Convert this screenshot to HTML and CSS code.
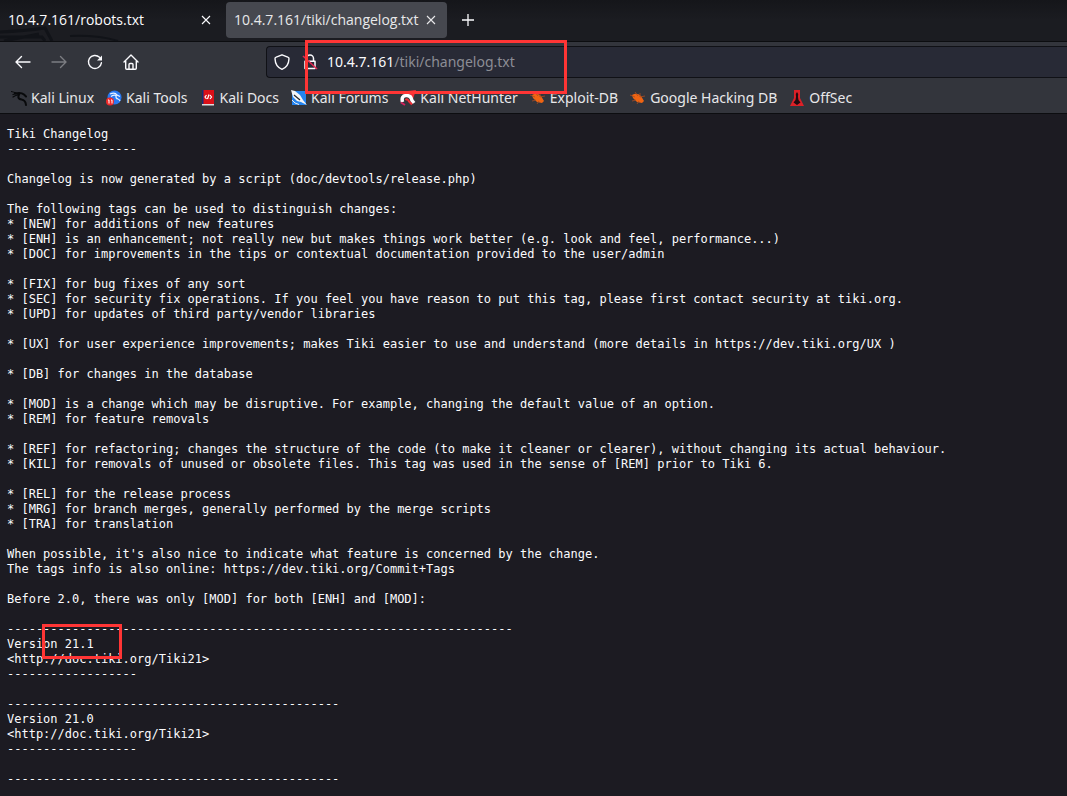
FILE: index.html
```
<!DOCTYPE html>
<html lang="en">
<head>
<meta charset="utf-8">
<title>10.4.7.161/tiki/changelog.txt</title>
<link rel="stylesheet" href="styles.css">
</head>
<body>
<header class="browser">
  <div class="tabs">
    <svg class="tabs-art" width="130" height="41" viewBox="0 0 130 41" fill="none"><path d="M0 32Q24 31 45 28L52 41M0 37L42 37L45 41M4 41L39 34" stroke="#111318" stroke-width="3"/><path d="M70 36Q98 35 118 41" stroke="#111318" stroke-width="2"/></svg>
    <div class="tab">
      <a class="tab-title" href="#">10.4.7.161/robots.txt</a>
      <button class="close" aria-label="Close tab"><svg width="10" height="10" viewBox="0 0 10 10"><path d="M1 1l8 8M9 1l-8 8" stroke="currentColor" stroke-width="1.1"/></svg></button>
    </div>
    <div class="tab active">
      <a class="tab-title" href="#">10.4.7.161/tiki/changelog.txt</a>
      <button class="close" aria-label="Close tab"><svg width="10" height="10" viewBox="0 0 10 10"><path d="M1 1l8 8M9 1l-8 8" stroke="currentColor" stroke-width="1.1"/></svg></button>
    </div>
    <button class="new-tab" aria-label="New tab"><svg width="14" height="14" viewBox="0 0 14 14"><path d="M7 1v12M1 7h12" stroke="currentColor" stroke-width="1.3"/></svg></button>
  </div>
  <div class="nav">
    <div class="nav-buttons">
      <button class="nav-btn" aria-label="Back"><svg width="16" height="16" viewBox="0 0 16 16" fill="none" stroke="currentColor" stroke-width="1.4" stroke-linecap="round" stroke-linejoin="round"><path d="M15 8H1.5M6.500 2.500L1 8l5.500 5.500"/></svg></button>
      <button class="nav-btn off" aria-label="Forward"><svg width="16" height="16" viewBox="0 0 16 16" fill="none" stroke="currentColor" stroke-width="1.4" stroke-linecap="round" stroke-linejoin="round"><path d="M1 8h13.500M9.500 2.500L15 8l-5.500 5.500"/></svg></button>
      <button class="nav-btn" aria-label="Reload"><svg width="16" height="16" viewBox="0 0 16 16" fill="none" stroke="currentColor" stroke-width="1.4" stroke-linecap="round"><path d="M12.500 3.300A6.500 6.500 0 1 0 14.400 8.800"/><path d="M15 1.500V6.500H10z" fill="currentColor" stroke="none"/></svg></button>
      <button class="nav-btn" aria-label="Home"><svg width="16" height="16" viewBox="0 0 16 16" fill="none" stroke="currentColor" stroke-width="1.4" stroke-linecap="round" stroke-linejoin="round"><path d="M1 8L8 1l7 7M2.700 7v7.200q0 1 1 1h8.600q1 0 1-1V7M6 15V10.500q0-1 1-1h2q1 0 1 1V15"/></svg></button>
    </div>
    <div class="url-bar">
      <svg width="16" height="16" viewBox="0 0 16 16" fill="none" stroke="currentColor" stroke-width="1.4" stroke-linejoin="round"><path d="M8 .8l5.800 2.300q1.200.4 1.200 1.600C14.800 9.200 12.600 13.500 8 15.300 3.400 13.500 1.200 9.200 1 4.700q0-1.200 1.200-1.600z"/></svg>
      <svg class="lock" width="16" height="16" viewBox="0 0 16 16" fill="none"><path d="M4.500 7V4.500a3.500 3.500 0 0 1 7 0V7M3 7.200h10v7.300H3z" stroke="currentColor" stroke-width="1.500" stroke-linejoin="round"/><path d="M1 2l14 13" stroke="#e22850" stroke-width="1.600"/></svg>
      <a class="url" href="#"><b>10.4.7.161</b>/tiki/changelog.txt</a>
      <span class="mark mark-url"></span>
    </div>
  </div>
  <nav class="bookmarks">
    <a class="bookmark" href="#"><svg width="16" height="16" viewBox="0 0 16 16" fill="none" stroke="#08090b" stroke-linecap="round"><path d="M0 1.500q3 .5 5 1.500M2 4.500q3-1.500 6 0M2 7q3-2 5-2" stroke-width="1.200"/><path d="M4 3.500q6-1.500 9 1l2 2M8 4.500q-2 4.500 2.500 5 4 .5 4.500 5.500" stroke-width="2"/></svg>Kali Linux</a>
    <a class="bookmark" href="#"><svg width="16" height="16" viewBox="0 0 16 16" fill="none"><circle cx="8.500" cy="7.500" r="7" fill="#2878f0"/><path d="M4 4q5-2 7 1l3 1.500M5 6.500q3-2 5-1-.5 3 2 3.500 1.500.5 2 2" stroke="#e9f3ff" stroke-width="1.200"/><circle cx="4" cy="11.500" r="4" fill="#ef2929"/><path d="M2 10h1v3.500M5 10h1v3.500" stroke="#fff"/></svg>Kali Tools</a>
    <a class="bookmark" href="#"><svg width="16" height="16" viewBox="0 0 16 16" fill="none"><path d="M2 0h12v14H2z" fill="#db1018"/><path d="M2 0h1.500v14H2z" fill="#182c76"/><path d="M2 14h12v1.500H2z" fill="#ddd"/><path d="M6.500 5L5 7l1.500 2M10 5l1.500 2L10 9M9 4.500L7.500 9" stroke="#fff" stroke-width="1.200"/></svg>Kali Docs</a>
    <a class="bookmark" href="#"><svg width="16" height="16" viewBox="0 0 16 16"><path d="M1 1h14v14H1z" fill="#2484ef"/><path d="M0 0l4 1 5 4 3 5 4 5-6-3-4-1-4-4z" fill="#f4f5f6"/><path d="M3 5l6 5" stroke="#20252c" stroke-width="1.200"/><path d="M1 10l3 3 4 1.500" stroke="#eee" fill="none"/></svg>Kali Forums</a>
    <a class="bookmark" href="#"><svg width="16" height="16" viewBox="0 0 16 16" fill="none"><path d="M8 1l8-1-3 9z" fill="#f32c35"/><path d="M2.500 12Q1 6 6 5.500q5-.5 6 5l2 2.500" stroke="#fff" stroke-width="3.500"/><path d="M5.500 10q2-2 3.500 1.500l3 3" stroke="#f32c35" stroke-width="2"/><path d="M1 12.500l4 2.500" stroke="#d3225d" stroke-width="2"/></svg>Kali NetHunter</a>
    <a class="bookmark" href="#"><svg width="16" height="16" viewBox="0 0 16 16"><path d="M2 5q5-3 9 1l3 5-2 2-5-1-4-4z" fill="#ef6412"/><path d="M0 5l5 2M5 2l3 4M10 3v4l5-1M2 11l4-1M7 14l2-3" stroke="#a94d22" stroke-width=".8" fill="none"/></svg>Exploit-DB</a>
    <a class="bookmark" href="#"><svg width="16" height="16" viewBox="0 0 16 16"><path d="M2 5q5-3 9 1l3 5-2 2-5-1-4-4z" fill="#ef6412"/><path d="M0 5l5 2M5 2l3 4M10 3v4l5-1M2 11l4-1M7 14l2-3" stroke="#a94d22" stroke-width=".8" fill="none"/></svg>Google Hacking DB</a>
    <a class="bookmark" href="#"><svg width="16" height="16" viewBox="0 0 16 16"><path d="M5 0h6v8l4 8H1l4-8z" fill="#dc2027"/><path d="M8 2l1.200 2L9 7l.5 3 2 2.500L8 15l-3.500-2.500 2-2.500L7 7l-.2-3z" fill="#210b10"/></svg>OffSec</a>
  </nav>
</header>
<main class="page">
<pre class="log">Tiki Changelog
------------------

Changelog is now generated by a script (doc/devtools/release.php)

The following tags can be used to distinguish changes:
* [NEW] for additions of new features
* [ENH] is an enhancement; not really new but makes things work better (e.g. look and feel, performance...)
* [DOC] for improvements in the tips or contextual documentation provided to the user/admin

* [FIX] for bug fixes of any sort
* [SEC] for security fix operations. If you feel you have reason to put this tag, please first contact security at tiki.org.
* [UPD] for updates of third party/vendor libraries

* [UX] for user experience improvements; makes Tiki easier to use and understand (more details in https://dev.tiki.org/UX )

* [DB] for changes in the database

* [MOD] is a change which may be disruptive. For example, changing the default value of an option.
* [REM] for feature removals

* [REF] for refactoring; changes the structure of the code (to make it cleaner or clearer), without changing its actual behaviour.
* [KIL] for removals of unused or obsolete files. This tag was used in the sense of [REM] prior to Tiki 6.

* [REL] for the release process
* [MRG] for branch merges, generally performed by the merge scripts
* [TRA] for translation

When possible, it's also nice to indicate what feature is concerned by the change.
The tags info is also online: https://dev.tiki.org/Commit+Tags

Before 2.0, there was only [MOD] for both [ENH] and [MOD]:

----------------------------------------------------------------------
<span class="version">Version 21.1<span class="mark mark-version"></span></span>
&lt;http://doc.tiki.org/Tiki21&gt;
------------------

----------------------------------------------
Version 21.0
&lt;http://doc.tiki.org/Tiki21&gt;
------------------

----------------------------------------------</pre>
</main>
</body>
</html>
```
FILE: styles.css
```
* {
  box-sizing: border-box;
}

body {
  margin: 0;
  min-height: 100vh;
  background: #1c1b22;
  color: #fbfbfe;
  font: 14px/20px "Open Sans", "Noto Sans", sans-serif;
  overflow: hidden;
}

a {
  color: inherit;
  text-decoration: none;
}

button {
  display: flex;
  align-items: center;
  justify-content: center;
  padding: 0;
  border: 0;
  background: none;
  color: inherit;
}

svg {
  flex: none;
}

.tabs {
  position: relative;
  display: flex;
  align-items: center;
  height: 42px;
  padding-bottom: 2px;
  border-bottom: 1px solid #0c0d10;
  background: linear-gradient(#15161a, #1b1c21 50%);
}

.tabs-art {
  position: absolute;
  left: 0;
  bottom: 0;
}

.tab {
  position: relative;
  display: flex;
  align-items: center;
  justify-content: space-between;
  width: 221px;
  height: 36px;
  padding: 1px 8px 0;
  border-radius: 4px;
}

.tab:not(.active) {
  width: 226px;
  padding-right: 12px;
}

.active {
  background: #46484f;
  color: #e8e8ea;
}

.close {
  width: 16px;
  height: 16px;
}

.new-tab {
  width: 32px;
  height: 32px;
  margin-left: 5px;
}

.nav {
  display: flex;
  align-items: center;
  height: 41px;
  padding-bottom: 1px;
  background: #33353c;
}

.nav-buttons {
  display: flex;
  flex: none;
  gap: 4px;
  width: 266px;
  padding-left: 7px;
}

.nav-btn {
  width: 32px;
  height: 32px;
}

.off {
  color: #7c7d82;
}

.url-bar {
  position: relative;
  display: flex;
  flex: 1;
  align-items: center;
  gap: 12px;
  height: 32px;
  padding-left: 7px;
  border: 1px solid #101116;
  border-right: 0;
  border-radius: 4px 0 0 4px;
  background: #282a36;
}

.url {
  margin-left: -3px;
  color: #8c8d95;
  font-family: "Noto Sans", sans-serif;
}

.url b {
  color: #fbfbfe;
  font-weight: 400;
}

.bookmarks {
  display: flex;
  align-items: center;
  gap: 12px;
  height: 31px;
  padding-left: 11px;
  border-bottom: 1px solid #0c0d10;
  background: #33353c;
  color: #e8e8ea;
  font-family: "Noto Sans", sans-serif;
  white-space: nowrap;
}

.bookmark {
  display: flex;
  align-items: center;
  gap: 4px;
}

.page {
  padding: 13px 7px;
}

.log {
  margin: 0;
  font: 12px/15px "DejaVu Sans Mono", monospace;
}

.version {
  position: relative;
}

.mark {
  position: absolute;
  border: 3px solid #ff3535;
  pointer-events: none;
}

.mark-url {
  top: -7px;
  left: 38px;
  width: 262px;
  height: 54px;
}

.mark-version {
  top: -13px;
  left: 35px;
  width: 80px;
  height: 35px;
}
```
